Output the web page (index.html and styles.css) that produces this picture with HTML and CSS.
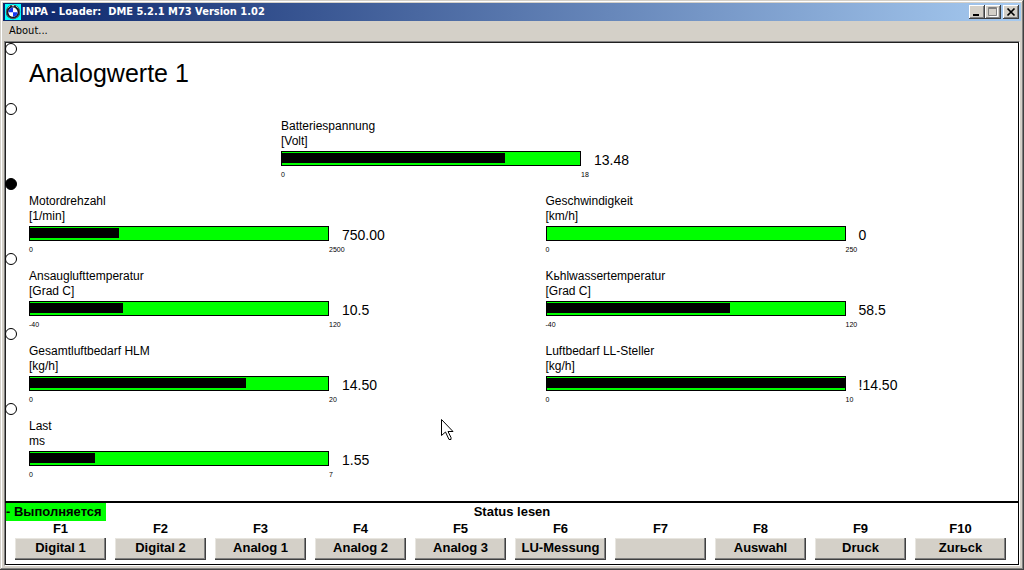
FILE: index.html
```html
<!DOCTYPE html>
<html lang="de">
<head>
<meta charset="utf-8">
<title>INPA - Loader: DME 5.2.1 M73 Version 1.02</title>
<link rel="stylesheet" href="styles.css">
</head>
<body>
<div class="window">
  <header class="titlebar">
    <svg class="app-icon" viewBox="0 0 16 16" aria-hidden="true">
      <rect width="16" height="16" fill="#00ffff"/>
      <circle cx="8" cy="8" r="7.2" fill="#181820"/>
      <circle cx="8" cy="8" r="6.600" fill="none" stroke="#80808c" stroke-width=".6"/>
      <circle cx="8" cy="8.200" r="4.600" fill="#fff"/>
      <path d="M8 8.200V3.600a4.600 4.600 0 0 0-4.600 4.600zM8 8.200v4.600a4.600 4.600 0 0 0 4.600-4.600z" fill="#1438f0"/>
      <path d="M3.500 3.500l1-1M7 1.800h2M11.500 2.500l1 1" stroke="#fff" stroke-width="1"/>
    </svg>
    <h1 class="titlebar-text">INPA - Loader:&nbsp; DME 5.2.1 M73 Version 1.02</h1>
    <div class="window-controls">
      <button class="control" aria-label="Minimize"><svg viewBox="0 0 12 10"><path d="M2 7h6v2H2z" fill="#000"/></svg></button>
      <button class="control" aria-label="Maximize" disabled><svg viewBox="0 0 12 10"><path d="M2.500 9.500h8V1" fill="none" stroke="#fff"/><path d="M1.500 .5h8v8h-8zM1 1.500h9" fill="none" stroke="#808080"/></svg></button>
      <button class="control control-close" aria-label="Close"><svg viewBox="0 0 12 10"><path d="M2.500 1.500l7 7M9.500 1.500l-7 7" stroke="#000" stroke-width="1.700"/></svg></button>
    </div>
  </header>
  <nav class="menubar"><button class="menu-item">About...</button></nav>
  <main class="client">
    <section class="screen">
      <div class="pages" role="radiogroup" aria-label="Page">
        <input class="page-dot" type="radio" name="page" aria-label="Page 1">
        <input class="page-dot" type="radio" name="page" aria-label="Page 2">
        <input class="page-dot" type="radio" name="page" aria-label="Page 3" checked>
        <input class="page-dot" type="radio" name="page" aria-label="Page 4">
        <input class="page-dot" type="radio" name="page" aria-label="Page 5">
        <input class="page-dot" type="radio" name="page" aria-label="Page 6">
      </div>
      <div class="readings">
        <h2 class="heading">Analogwerte 1</h2>
        <div class="gauges">
          <div class="gauge gauge-wide">
            <div class="name">Batteriespannung</div><div class="unit">[Volt]</div>
            <div class="bar"><div class="fill" style="width:74.9%"></div></div><div class="value">13.48</div>
            <div class="scale">0</div><div class="scale">18</div>
          </div>
          <div class="gauge">
            <div class="name">Motordrehzahl</div><div class="unit">[1/min]</div>
            <div class="bar"><div class="fill" style="width:30%"></div></div><div class="value">750.00</div>
            <div class="scale">0</div><div class="scale">2500</div>
          </div>
          <div class="gauge">
            <div class="name">Geschwindigkeit</div><div class="unit">[km/h]</div>
            <div class="bar"><div class="fill" style="width:0%"></div></div><div class="value">0</div>
            <div class="scale">0</div><div class="scale">250</div>
          </div>
          <div class="gauge">
            <div class="name">Ansauglufttemperatur</div><div class="unit">[Grad C]</div>
            <div class="bar"><div class="fill" style="width:31.3%"></div></div><div class="value">10.5</div>
            <div class="scale">-40</div><div class="scale">120</div>
          </div>
          <div class="gauge">
            <div class="name">Kьhlwassertemperatur</div><div class="unit">[Grad C]</div>
            <div class="bar"><div class="fill" style="width:61.5%"></div></div><div class="value">58.5</div>
            <div class="scale">-40</div><div class="scale">120</div>
          </div>
          <div class="gauge">
            <div class="name">Gesamtluftbedarf HLM</div><div class="unit">[kg/h]</div>
            <div class="bar"><div class="fill" style="width:72.5%"></div></div><div class="value">14.50</div>
            <div class="scale">0</div><div class="scale">20</div>
          </div>
          <div class="gauge">
            <div class="name">Luftbedarf LL-Steller</div><div class="unit">[kg/h]</div>
            <div class="bar"><div class="fill" style="width:100%"></div></div><div class="value">!14.50</div>
            <div class="scale">0</div><div class="scale">10</div>
          </div>
          <div class="gauge">
            <div class="name">Last</div><div class="unit">ms</div>
            <div class="bar"><div class="fill" style="width:21.9%"></div></div><div class="value">1.55</div>
            <div class="scale">0</div><div class="scale">7</div>
          </div>
        </div>
      </div>
      <svg class="cursor" viewBox="0 0 13 21" aria-hidden="true"><path d="M.5 .5v16l4-3.500 3.500 7.500h2v-2l-3-6h5z" fill="#fff" stroke="#000"/></svg>
    </section>
    <footer class="softkeys">
      <div class="status"><span class="running">- Выполняется</span><span class="status-text">Status lesen</span></div>
      <div class="keys">
        <div class="key"><label for="f1">F1</label><button id="f1">Digital 1</button></div>
        <div class="key"><label for="f2">F2</label><button id="f2">Digital 2</button></div>
        <div class="key"><label for="f3">F3</label><button id="f3">Analog 1</button></div>
        <div class="key"><label for="f4">F4</label><button id="f4">Analog 2</button></div>
        <div class="key"><label for="f5">F5</label><button id="f5">Analog 3</button></div>
        <div class="key"><label for="f6">F6</label><button id="f6">LU-Messung</button></div>
        <div class="key"><label for="f7">F7</label><button id="f7"></button></div>
        <div class="key"><label for="f8">F8</label><button id="f8">Auswahl</button></div>
        <div class="key"><label for="f9">F9</label><button id="f9">Druck</button></div>
        <div class="key"><label for="f10">F10</label><button id="f10">Zurьck</button></div>
      </div>
    </footer>
  </main>
</div>
</body>
</html>
```
FILE: styles.css
```css
* { box-sizing: border-box; }

body {
  margin: 0;
  background: #d4d0c8;
  color: #000;
  font-family: "Liberation Sans", Arial, sans-serif;
}

h1, h2 { margin: 0; font-weight: normal; }

button { padding: 0; color: inherit; font: inherit; }

.window {
  display: flex;
  flex-direction: column;
  min-height: 100vh;
  padding: 3px 4px 4px;
  background: #d4d0c8;
  box-shadow: inset -1px -1px #404040, inset 1px 1px #d4d0c8, inset -2px -2px #808080, inset 2px 2px #fff;
}

.titlebar {
  display: flex;
  align-items: center;
  gap: 1px;
  height: 18px;
  margin: 0 -1px;
  padding: 0 2px;
  background: linear-gradient(to right, #0a246a, #a6caf0);
  color: #fff;
}

.app-icon { width: 16px; height: 16px; }

.titlebar-text {
  flex: 1;
  font: bold 11px/18px "DejaVu Sans Condensed", "DejaVu Sans", sans-serif;
}

.window-controls { display: flex; }

.control {
  display: flex;
  width: 16px;
  height: 14px;
  border: 0;
  padding: 2px;
  background: #d4d0c8;
  box-shadow: inset -1px -1px #404040, inset 1px 1px #fff, inset -2px -2px #808080;
}

.control svg { width: 12px; height: 10px; }

.control-close { margin-left: 2px; }

.menubar { display: flex; height: 20px; padding: 0 5px; }

.menu-item {
  border: 0;
  background: none;
  font: 11px/20px "DejaVu Sans Condensed", "DejaVu Sans", sans-serif;
}

.client {
  display: flex;
  flex: 1;
  flex-direction: column;
  border: 1px solid #808080;
  border-right-color: #fff;
  border-bottom-color: #fff;
  background: #fff;
  box-shadow: inset 1px 1px #202020, inset -1px -1px #000;
}

.screen {
  position: relative;
  display: flex;
  flex: 1;
  padding-top: 1px;
}

.pages {
  display: flex;
  flex-direction: column;
  gap: 63px;
}

.page-dot {
  appearance: none;
  width: 12px;
  height: 12px;
  margin: 0;
  border: 1px solid #000;
  border-radius: 50%;
  background: #fff;
}

.page-dot:checked { background: #000; }

.page-dot:first-child { margin-bottom: -15px; }

.readings { flex: 1; padding: 15px 0 0 12px; }

.heading { font-size: 25px; line-height: 30px; }

.gauges {
  display: grid;
  grid-template-columns: 1fr 1fr;
  gap: 15px 43px;
  padding-top: 31px;
}

.gauge {
  display: grid;
  grid-template-columns: 300px auto;
  justify-content: start;
}

.gauge-wide { grid-column: 1 / -1; margin-left: 252px; }

.name, .unit {
  grid-column: 1 / -1;
  font-size: 12px;
  line-height: 15px;
}

.unit { padding-bottom: 2px; }

.bar {
  height: 15px;
  padding: 1px 0 2px;
  border: 1px solid #000;
  background: #0f0;
}

.fill { height: 10px; background: #000; }

.value {
  height: 15px;
  padding-left: 13px;
  font-size: 14px;
  line-height: 18px;
}

.scale {
  height: 13px;
  font-size: 7px;
  line-height: 18px;
}

.cursor {
  position: absolute;
  left: 43%;
  top: 377px;
  width: 13px;
  height: 21px;
}

.softkeys {
  padding: 0 1px 5px;
  border-top: 2px solid #000;
  font-weight: bold;
  font-size: 13px;
}

.status {
  display: grid;
  grid-template-columns: 100px 1fr 100px;
  line-height: 18px;
  text-align: center;
}

.running { background: #0f0; text-align: left; white-space: nowrap; }

.keys {
  display: grid;
  grid-template-columns: repeat(10, 1fr);
  gap: 9px;
  padding: 0 12px 0 9px;
}

.key {
  display: flex;
  flex-direction: column;
  gap: 1px;
  line-height: 16px;
  text-align: center;
}

.key button {
  height: 22px;
  border: 0;
  padding-bottom: 2px;
  background: #d4d0c8;
  box-shadow: inset -1px -1px #404040, inset -2px -2px #808080, inset 1px 1px #e8e6e0;
  white-space: nowrap;
}
```
